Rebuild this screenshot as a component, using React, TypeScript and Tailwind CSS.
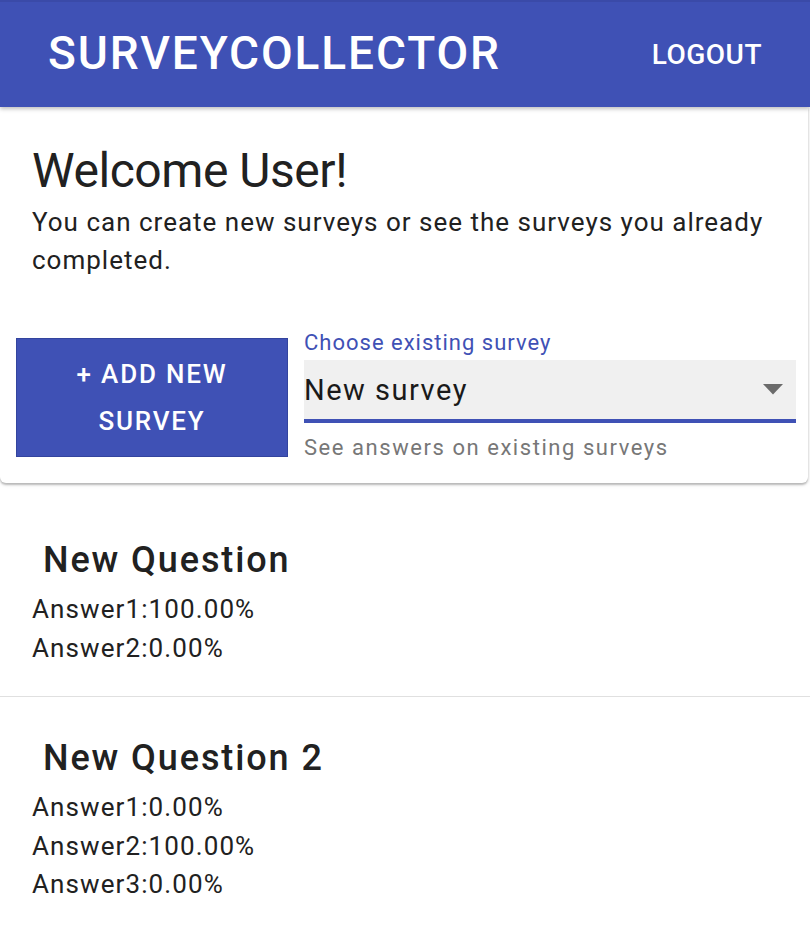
import React from "react";

const font = { fontFamily: "Roboto, 'Liberation Sans', Arial, sans-serif" };

function Question({ title, answers, last }: { title: string; answers: string[]; last?: boolean }) {
  return (
    <div className={last ? "px-[32px] pt-[40px] pb-[29px]" : "px-[32px] pt-[40px] pb-[29px] border-b border-[#e0e0e0]"}>
      <div className="pl-[11px] text-[36px] leading-[42px] font-medium text-[#212121] tracking-[1.9px]">
        {title}
      </div>
      <div className="mt-[9px] flex flex-col">
        {answers.map((a) => (
          <div key={a} className="text-[26px] leading-[38.5px] text-[#212121] tracking-[1.1px]">
            {a}
          </div>
        ))}
      </div>
    </div>
  );
}

export default function App() {
  return (
    <div className="min-h-[931px] bg-white" style={font}>
      <header className="h-[107px] bg-[#3f51b5] border-t-[2px] border-[#3a4aa8] flex items-center justify-between pl-[48px] pr-[48px] shadow-[0_2px_4px_rgba(0,0,0,0.25)] relative z-10">
        <div className="text-white text-[46px] leading-[54px] font-medium tracking-[1.9px] -mt-[3px]">
          SURVEYCOLLECTOR
        </div>
        <div className="text-white text-[28px] leading-[32px] font-medium tracking-[0.5px]">
          LOGOUT
        </div>
      </header>

      <div className="bg-white mr-[2px] rounded-b-[6px] shadow-[0_2px_2px_rgba(0,0,0,0.22),0_1px_5px_rgba(0,0,0,0.12)] pt-[36px] pb-[22px]">
        <div className="px-[32px]">
          <h1 className="text-[48px] leading-[56px] font-normal text-[#212121] tracking-[-0.45px]">Welcome User!</h1>
          <p className="mt-[4px] text-[26px] leading-[38px] text-[#212121] tracking-[1px]">
            You can create new surveys or see the surveys you already completed.
          </p>
        </div>
        <div className="mt-[51px] pl-[16px] pr-[12px] flex items-start gap-[16px]">
          <button className="mt-[8px] w-[272px] h-[119px] shrink-0 bg-[#3f51b5] border border-[#33449e] text-white text-[26px] leading-[47px] font-medium tracking-[1.8px] flex flex-col items-center justify-center">
            <span>+ ADD NEW</span>
            <span>SURVEY</span>
          </button>
          <div className="flex-1 flex flex-col">
            <div className="text-[22px] leading-[26px] text-[#3f51b5] tracking-[1px]">Choose existing survey</div>
            <div className="mt-[4px] h-[63px] bg-[#f0f0f0] border-b-[4px] border-[#3f51b5] flex items-center justify-between pr-[13px]">
              <span className="text-[29px] leading-[34px] text-[#1a1a1a] tracking-[1.5px]">New survey</span>
              <svg width="20" height="11" viewBox="0 0 20 11">
                <polygon points="0,0 20,0 10,10.5" fill="#6b6b6b" />
              </svg>
            </div>
            <div className="mt-[12px] text-[22px] leading-[26px] text-[#777777] tracking-[1.55px]">
              See answers on existing surveys
            </div>
          </div>
        </div>
      </div>

      <div className="mt-[16px]">
        <Question title="New Question" answers={["Answer1:100.00%", "Answer2:0.00%"]} />
        <Question
          title="New Question 2"
          answers={["Answer1:0.00%", "Answer2:100.00%", "Answer3:0.00%"]}
          last
        />
      </div>
    </div>
  );
}
